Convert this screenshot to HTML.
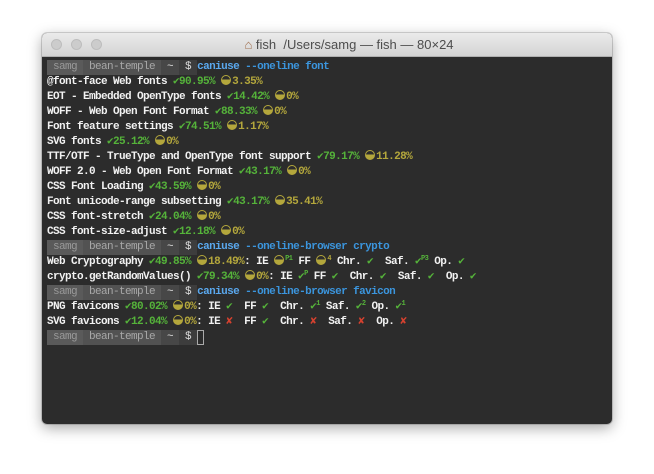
<!DOCTYPE html>
<html><head><meta charset="utf-8"><style>
html,body{margin:0;padding:0;background:#fff;width:654px;height:474px;overflow:hidden}
.win{position:absolute;left:42px;top:33px;width:570px;height:391px;border-radius:5px;overflow:hidden;box-shadow:0 4px 14px rgba(0,0,0,.35),0 0 0 1px rgba(0,0,0,.15);background:#2c2c2c}
.tb{height:23px;background:linear-gradient(#ebebeb,#d3d3d3);border-bottom:1px solid #b0b0b0;position:relative}
.dot{position:absolute;top:6px;width:11px;height:11px;border-radius:50%;background:#ccc;border:1px solid #bdbdbd;box-sizing:border-box}
.title{position:absolute;left:0;right:0;top:4px;text-align:center;font:13px "Liberation Sans",sans-serif;color:#4d4d4d;padding-left:44px}
.term{position:absolute;left:5px;top:27px;font:bold 11px/15px "Liberation Mono","DejaVu Sans Mono",monospace;letter-spacing:-0.6px;color:#f2f2f2;white-space:pre}
.p{display:inline-block;height:15px;line-height:15px;vertical-align:top;font-weight:normal;position:relative}
.s1{background:#5a5a5a;color:#9a9a9a}
.s2{background:#525252;color:#a8a8a8}
.s3{background:#474747;color:#ddd}
.s4{background:#3d3d3d;color:#ddd}
.g{color:#55b33a}.y{color:#b4a73c}.b{color:#3b95dd}.bb{color:#5aa8ee}.r{color:#d5412f}
.h{display:inline-block;width:10px;height:10px;border-radius:50%;background:linear-gradient(#2c2c2c 45%,#b4a73c 45%);border:1px solid #b4a73c;box-sizing:border-box;vertical-align:-1px;margin-right:1px}
sup{font-size:7px;line-height:0;vertical-align:4px;color:#55b33a}
.cur{display:inline-block;width:5px;height:13px;border:1px solid #aaa;vertical-align:-2px}
</style></head><body>
<div class="win">
<div class="tb">
<div class="dot" style="left:9px"></div><div class="dot" style="left:29px"></div><div class="dot" style="left:49px"></div>
<div class="title"><span style="color:#a07050">⌂</span> fish&nbsp; /Users/samg — fish — 80×24</div>
</div>
<div class="term"><span class="p s1"> samg </span><span class="p s2"> bean-temple </span><span class="p s3"> ~ </span><span class="p s4"> $ </span><span class="bb">caniuse</span> <span class="b">--oneline font</span>
@font-face Web fonts <span class="g">✔90.95%</span> <span class="h"></span><span class="y">3.35%</span>
EOT - Embedded OpenType fonts <span class="g">✔14.42%</span> <span class="h"></span><span class="y">0%</span>
WOFF - Web Open Font Format <span class="g">✔88.33%</span> <span class="h"></span><span class="y">0%</span>
Font feature settings <span class="g">✔74.51%</span> <span class="h"></span><span class="y">1.17%</span>
SVG fonts <span class="g">✔25.12%</span> <span class="h"></span><span class="y">0%</span>
TTF/OTF - TrueType and OpenType font support <span class="g">✔79.17%</span> <span class="h"></span><span class="y">11.28%</span>
WOFF 2.0 - Web Open Font Format <span class="g">✔43.17%</span> <span class="h"></span><span class="y">0%</span>
CSS Font Loading <span class="g">✔43.59%</span> <span class="h"></span><span class="y">0%</span>
Font unicode-range subsetting <span class="g">✔43.17%</span> <span class="h"></span><span class="y">35.41%</span>
CSS font-stretch <span class="g">✔24.04%</span> <span class="h"></span><span class="y">0%</span>
CSS font-size-adjust <span class="g">✔12.18%</span> <span class="h"></span><span class="y">0%</span>
<span class="p s1"> samg </span><span class="p s2"> bean-temple </span><span class="p s3"> ~ </span><span class="p s4"> $ </span><span class="bb">caniuse</span> <span class="b">--oneline-browser crypto</span>
Web Cryptography <span class="g">✔49.85%</span> <span class="h"></span><span class="y">18.49%</span>: IE <span class="h"></span><sup>P1</sup> FF <span class="h"></span><sup class="y">4</sup> Chr. <span class="g">✔</span>  Saf. <span class="g">✔</span><sup>P3</sup> Op. <span class="g">✔</span>
crypto.getRandomValues() <span class="g">✔79.34%</span> <span class="h"></span><span class="y">0%</span>: IE <span class="g">✔</span><sup>P</sup> FF <span class="g">✔</span>  Chr. <span class="g">✔</span>  Saf. <span class="g">✔</span>  Op. <span class="g">✔</span>
<span class="p s1"> samg </span><span class="p s2"> bean-temple </span><span class="p s3"> ~ </span><span class="p s4"> $ </span><span class="bb">caniuse</span> <span class="b">--oneline-browser favicon</span>
PNG favicons <span class="g">✔80.02%</span> <span class="h"></span><span class="y">0%</span>: IE <span class="g">✔</span>  FF <span class="g">✔</span>  Chr. <span class="g">✔</span><sup>1</sup> Saf. <span class="g">✔</span><sup>2</sup> Op. <span class="g">✔</span><sup>1</sup>
SVG favicons <span class="g">✔12.04%</span> <span class="h"></span><span class="y">0%</span>: IE <span class="r">✘</span>  FF <span class="g">✔</span>  Chr. <span class="r">✘</span>  Saf. <span class="r">✘</span>  Op. <span class="r">✘</span>
<span class="p s1"> samg </span><span class="p s2"> bean-temple </span><span class="p s3"> ~ </span><span class="p s4"> $ </span><span class="cur"></span></div>
</div>
</body></html>
